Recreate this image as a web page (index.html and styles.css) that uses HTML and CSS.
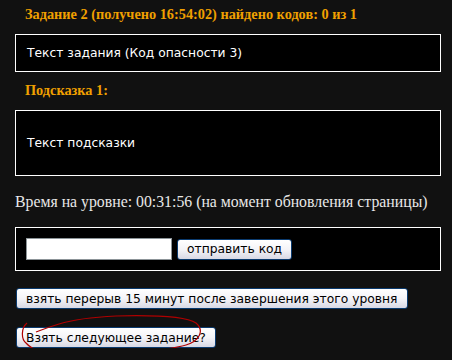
FILE: index.html
```html
<!DOCTYPE html>
<html lang="ru">
<head>
  <meta charset="UTF-8" />
  <title>Задание</title>
  <link rel="stylesheet" href="styles.css">
</head>
<body>
<div class="level">
  <h3 class="title">Задание 2 (получено 16:54:02) найдено кодов: 0 из 1</h3>
  <div class="box task">Текст задания (Код опасности 3)</div>

  <h3 class="title hint-title">Подсказка 1:</h3>
  <div class="box hint">Текст подсказки</div>

  <p class="time">Время на уровне: 00:31:56 (на момент обновления страницы)</p>

  <form class="box code-form">
    <input type="text" class="code-input" name="code" />
    <button type="button" class="btn">отправить код</button>
  </form>

  <div class="actions">
    <button type="button" class="btn">взять перерыв 15 минут после завершения этого уровня</button>
    <div class="next-wrap">
      <button type="button" class="btn">Взять следующее задание?</button>
      <svg class="circle" width="200" height="46" viewBox="0 0 200 46">
        <path d="M12 8 C 6 13, 6 24, 11 28 C 18 36, 30 40, 51 41 C 80 42, 150 36, 171 30 C 184 26, 190 16, 181 8 C 172 2, 140 0, 101 1 C 80 2, 60 4, 44 9 C 34 12, 26 15, 21 17"
              fill="none" stroke="#b00000" stroke-width="1.2" />
      </svg>
    </div>
  </div>
</div>
</body>
</html>
```

FILE: styles.css
```css
* {
  box-sizing: border-box;
}

body {
  margin: 0;
  background: #111111;
  color: #ffffff;
}

.level {
  width: 426px;
  margin-left: 15px;
  padding-top: 6px;
}

.title {
  margin: 0 0 12px 10px;
  font-family: "Liberation Serif", serif;
  font-size: 14.3px;
  font-weight: bold;
  line-height: 16px;
  color: #f0a000;
}

.hint-title {
  margin-top: 10px;
}

.box {
  border: 1px solid #ffffff;
  background: #000000;
  padding: 0 11px;
  font-family: "DejaVu Sans", sans-serif;
  font-size: 12.3px;
  color: #ffffff;
}

.task {
  height: 38px;
  line-height: 36px;
}

.hint {
  height: 66px;
  line-height: 64px;
}

.time {
  margin: 17px 0 16px;
  font-family: "Liberation Serif", serif;
  font-size: 15.8px;
  line-height: 18px;
  color: #e8e8e8;
}

.code-form {
  height: 44px;
  margin: 0;
  display: flex;
  align-items: center;
  gap: 5px;
  padding: 0 10px;
}

.code-input {
  width: 146px;
  height: 22px;
  border: 1px solid #8c9498;
  background: #ffffff;
  margin: 0;
}

.btn {
  height: 21px;
  padding: 0 9px;
  border: 1px solid #0a3a6e;
  border-radius: 3px;
  background: linear-gradient(#ffffff, #f4f4f8 50%, #d8d8e4);
  font-family: "DejaVu Sans", sans-serif;
  font-size: 12.3px;
  color: #000000;
  cursor: pointer;
}

.actions {
  padding-top: 17px;
  display: flex;
  flex-direction: column;
  align-items: flex-start;
  gap: 18px;
}

.actions .btn {
  margin-left: 1px;
}

.next-wrap {
  position: relative;
}

.circle {
  position: absolute;
  left: 0;
  top: -12px;
}
```
